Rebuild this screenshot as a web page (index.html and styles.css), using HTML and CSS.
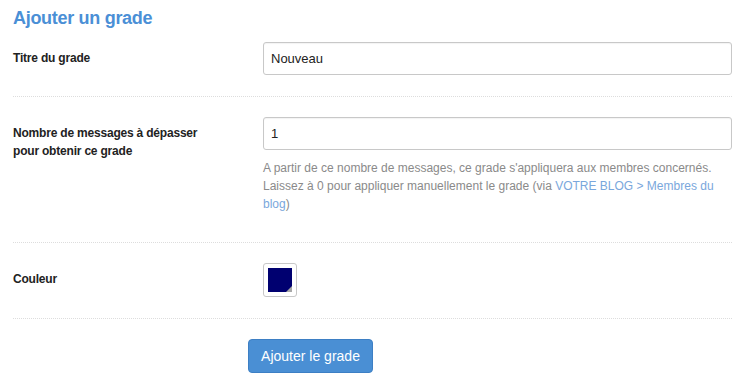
FILE: index.html
```html
<!DOCTYPE html>
<html lang="fr">
<head>
  <meta charset="UTF-8">
  <meta name="viewport" content="width=device-width, initial-scale=1.0">
  <title>Ajouter un grade</title>
  <link rel="stylesheet" href="styles.css">
</head>
<body>

  <div class="container">
    <h2>Ajouter un grade</h2>

    <form class="grade-form">
      <!-- Titre -->
      <div class="form-row">
        <label for="grade-title">Titre du grade</label>
        <div class="field">
          <input type="text" id="grade-title" value="Nouveau">
        </div>
      </div>

      <!-- Nombre de messages -->
      <div class="form-row">
        <label for="grade-messages">Nombre de messages à dépasser pour obtenir ce grade</label>
        <div class="field">
          <input type="text" id="grade-messages" value="1">
          <p class="help">A partir de ce nombre de messages, ce grade s'appliquera aux membres concernés. Laissez à 0 pour appliquer manuellement le grade (via <a href="#">VOTRE BLOG &gt; Membres du blog</a>)</p>
        </div>
      </div>

      <!-- Couleur -->
      <div class="form-row">
        <label>Couleur</label>
        <div class="field">
          <span class="color-picker"><span class="swatch"></span></span>
        </div>
      </div>

      <button type="button" class="btn-primary">Ajouter le grade</button>
    </form>
  </div>

</body>
</html>
```

FILE: styles.css
```css
body {
  font-family: "Liberation Sans", Arial, sans-serif;
  background-color: #fff;
  color: #222;
  margin: 0;
}

.container {
  padding: 6px 10px 0 13px;
}

h2 {
  color: #4a8fd6;
  font-size: 18px;
  letter-spacing: -0.3px;
  font-weight: bold;
  margin: 0 0 12px;
  line-height: 24px;
}

.form-row {
  display: grid;
  grid-template-columns: 250px 1fr;
  padding: 0 0 21px;
  margin-bottom: 20px;
  border-bottom: 1px dotted #ddd;
}

.form-row label {
  font-size: 12px;
  font-weight: bold;
  letter-spacing: -0.2px;
  line-height: 18px;
  padding-top: 7px;
  padding-right: 40px;
  color: #222;
}

.field input {
  box-sizing: border-box;
  width: 100%;
  height: 33px;
  padding: 0 7px;
  border: 1px solid #c8c8c8;
  border-radius: 3px;
  font-family: inherit;
  font-size: 13px;
  color: #222;
  box-shadow: inset 0 1px 1px rgba(0, 0, 0, 0.05);
}

.help {
  margin: 9px 0 8px;
  font-size: 12px;
  line-height: 18px;
  color: #8a8a8a;
}

.help a {
  color: #7aa7dc;
  text-decoration: none;
}

.color-picker {
  display: block;
  box-sizing: border-box;
  width: 34px;
  height: 34px;
  padding: 4px;
  border: 1px solid #c8c8c8;
  border-radius: 3px;
  background: #fff;
}

.swatch {
  position: relative;
  display: block;
  width: 24px;
  height: 24px;
  background-color: #000070;
}

/* small resize corner of the swatch */
.swatch::after {
  content: "";
  position: absolute;
  right: 0;
  bottom: 0;
  border-style: solid;
  border-width: 0 0 6px 6px;
  border-color: transparent transparent #a8a8a8 transparent;
}

.btn-primary {
  margin-left: 235px;
  width: 125px;
  height: 34px;
  background-color: #4a8fd4;
  border: 1px solid #3d7fc4;
  border-radius: 4px;
  color: #fff;
  font-family: inherit;
  font-size: 14px;
  cursor: pointer;
}

.btn-primary:hover {
  background-color: #3d7fc4;
}
```
